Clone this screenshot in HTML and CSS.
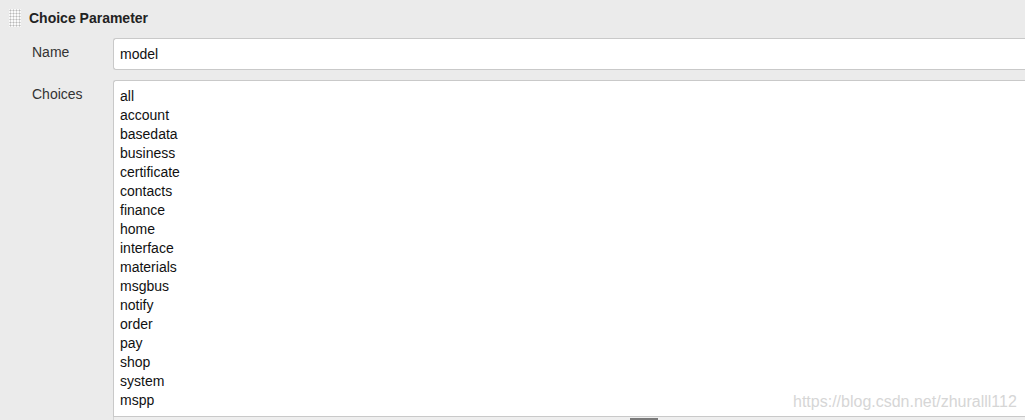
FILE: index.html
```html
<!DOCTYPE html>
<html>
<head>
<meta charset="utf-8">
<link rel="stylesheet" href="styles.css">
</head>
<body>
<div class="section">
  <div class="header">
    <span class="grip"></span>
    <span class="title">Choice Parameter</span>
  </div>
  <div class="row row-name">
    <div class="label">Name</div>
    <div class="field"><div class="input">model</div></div>
  </div>
  <div class="row row-choices">
    <div class="label">Choices</div>
    <div class="field">
      <div class="textarea">all<br>account<br>basedata<br>business<br>certificate<br>contacts<br>finance<br>home<br>interface<br>materials<br>msgbus<br>notify<br>order<br>pay<br>shop<br>system<br>mspp</div>
      <div class="ta-handle"><span class="ta-grip"></span></div>
    </div>
  </div>
</div>
<div class="watermark">https://blog.csdn.net/zhuralll112</div>
</body>
</html>
```

FILE: styles.css
```css
html, body {
  margin: 0;
  padding: 0;
}
body {
  width: 1025px;
  height: 420px;
  overflow: hidden;
  background: #ebebeb;
  font-family: "Liberation Sans", Arial, sans-serif;
  font-size: 14px;
  color: #333;
  position: relative;
}
.section {
  width: 1025px;
}
.header {
  display: flex;
  align-items: center;
  height: 36px;
  padding-left: 9px;
  gap: 8px;
}
.grip {
  display: block;
  width: 12px;
  height: 18px;
  background-color: #fafafa;
  background-image: radial-gradient(circle, #b8b8b8 0.9px, transparent 1.1px);
  background-size: 3px 3px;
  background-position: 0 0;
}
.title {
  font-weight: bold;
  font-size: 14px;
  color: #222;
}
.row {
  display: grid;
  grid-template-columns: 113px 1fr;
}
.row-name {
  margin-top: 2px;
}
.row-choices {
  margin-top: 10px;
}
.label {
  padding-left: 32px;
  padding-top: 5px;
  line-height: 19px;
  color: #333;
}
.input {
  box-sizing: border-box;
  height: 32px;
  border: 1px solid #c9c9c9;
  border-right: 0;
  border-radius: 3px 0 0 3px;
  background: #fff;
  padding: 0 6px;
  line-height: 30px;
  color: #111;
}
.textarea {
  box-sizing: border-box;
  border: 1px solid #c9c9c9;
  border-right: 0;
  border-radius: 3px 0 0 0;
  background: #fff;
  padding: 6px 6px;
  line-height: 19px;
  color: #111;
  height: 337px;
}
.ta-handle {
  height: 6px;
  background: #eee;
  border-left: 1px solid #d4d4d4;
  display: flex;
  padding-left: 516px;
}
.ta-grip {
  display: block;
  width: 28px;
  height: 2px;
  margin-top: 1px;
  background: #7a7a7a;
}
.watermark {
  position: absolute;
  left: 793px;
  top: 392px;
  font-size: 16px;
  line-height: 20px;
  color: #d6d6d6;
}
```
